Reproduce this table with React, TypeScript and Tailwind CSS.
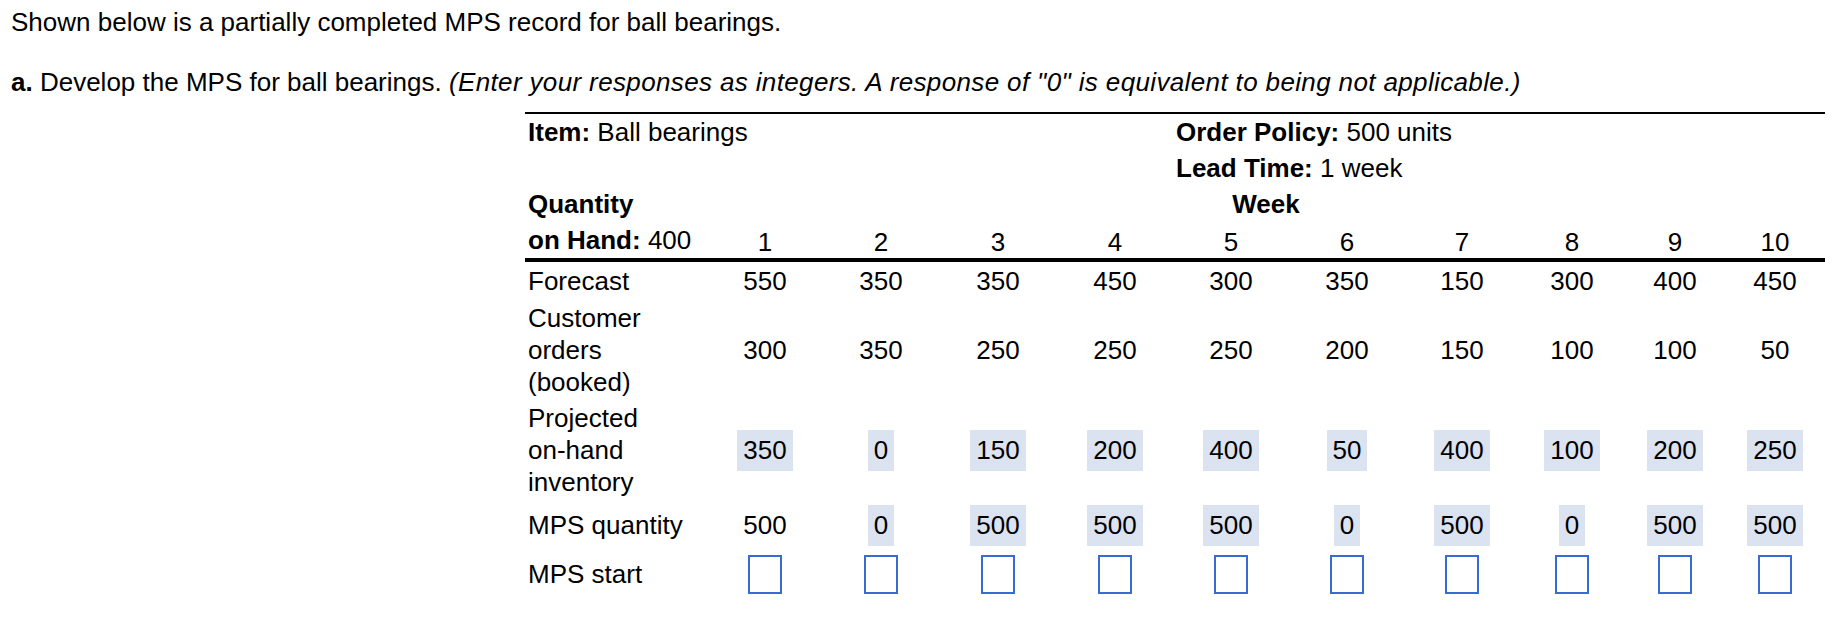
import React from 'react';

// MPS record table for ball bearings
const weeks = [1, 2, 3, 4, 5, 6, 7, 8, 9, 10];
const forecast = [550, 350, 350, 450, 300, 350, 150, 300, 400, 450];
const orders = [300, 350, 250, 250, 250, 200, 150, 100, 100, 50];
const onHand = [350, 0, 150, 200, 400, 50, 400, 100, 200, 250];
const mpsQty = [500, 0, 500, 500, 500, 0, 500, 0, 500, 500];

const cols =
  'grid grid-cols-[182px_116px_116px_118px_116px_116px_116px_114px_106px_100px_100px]';

const Filled: React.FC<{ value: number }> = ({ value }) => (
  <span className="inline-flex h-[41px] items-center bg-[#dbe2f0] px-[6px]">{value}</span>
);

const App: React.FC = () => {
  return (
    <div
      className="min-h-screen bg-white pl-[11px] pt-[6px] text-[26px] text-black"
      style={{ fontFamily: '"Liberation Sans", Arial, sans-serif' }}
    >
      <p className="h-[32px] leading-[32px]">
        Shown below is a partially completed MPS record for ball bearings.
      </p>
      <p className="mt-[28px] h-[32px] whitespace-nowrap leading-[32px]">
        <span className="font-bold">a.</span> Develop the MPS for ball bearings.{' '}
        <span className="italic tracking-[0.014em]">
          (Enter your responses as integers. A response of "0" is equivalent to being not applicable.)
        </span>
      </p>

      <div className="ml-[514px] mt-[14px] w-[1300px] leading-[32px]">
        {/* header */}
        <div className="border-t-2 border-b-4 border-black">
          <div className={`${cols} h-[36px] items-center`}>
            <div className="col-span-5 pl-[3px]">
              <span className="font-bold">Item:</span> Ball bearings
            </div>
            <div className="col-span-6 pl-[3px]">
              <span className="font-bold">Order Policy:</span> 500 units
            </div>
          </div>
          <div className={`${cols} h-[36px] items-center`}>
            <div className="col-start-6 col-span-6 pl-[3px]">
              <span className="font-bold">Lead Time:</span> 1 week
            </div>
          </div>
          <div className={`${cols} h-[36px] items-center`}>
            <div className="pl-[3px] font-bold">Quantity</div>
            <div className="col-span-10 text-center font-bold">Week</div>
          </div>
          <div className={`${cols} h-[36px] items-center`}>
            <div className="pl-[3px]">
              <span className="font-bold">on Hand:</span> 400
            </div>
            {weeks.map((w) => (
              <div key={w} className="pt-[4px] text-center">
                {w}
              </div>
            ))}
          </div>
        </div>

        {/* body */}
        <div className={`${cols} h-[38px] items-center`}>
          <div className="pl-[3px]">Forecast</div>
          {forecast.map((v, i) => (
            <div key={i} className="text-center">
              {v}
            </div>
          ))}
        </div>
        <div className={`${cols} h-[100px] items-center`}>
          <div className="pl-[3px]">
            Customer
            <br />
            orders
            <br />
            (booked)
          </div>
          {orders.map((v, i) => (
            <div key={i} className="text-center">
              {v}
            </div>
          ))}
        </div>
        <div className={`${cols} h-[100px] items-center`}>
          <div className="pl-[3px]">
            Projected
            <br />
            on-hand
            <br />
            inventory
          </div>
          {onHand.map((v, i) => (
            <div key={i} className="flex justify-center">
              <Filled value={v} />
            </div>
          ))}
        </div>
        <div className={`${cols} h-[50px] items-center`}>
          <div className="pl-[3px]">MPS quantity</div>
          {mpsQty.map((v, i) => (
            <div key={i} className="flex justify-center">
              {i === 0 ? <span className="px-[6px]">{v}</span> : <Filled value={v} />}
            </div>
          ))}
        </div>
        <div className={`${cols} h-[48px] items-center`}>
          <div className="pl-[3px]">MPS start</div>
          {weeks.map((w) => (
            <div key={w} className="flex justify-center">
              <div className="h-[39px] w-[34px] border-2 border-[#3a6bd0] bg-white" />
            </div>
          ))}
        </div>
      </div>
    </div>
  );
};

export default App;
